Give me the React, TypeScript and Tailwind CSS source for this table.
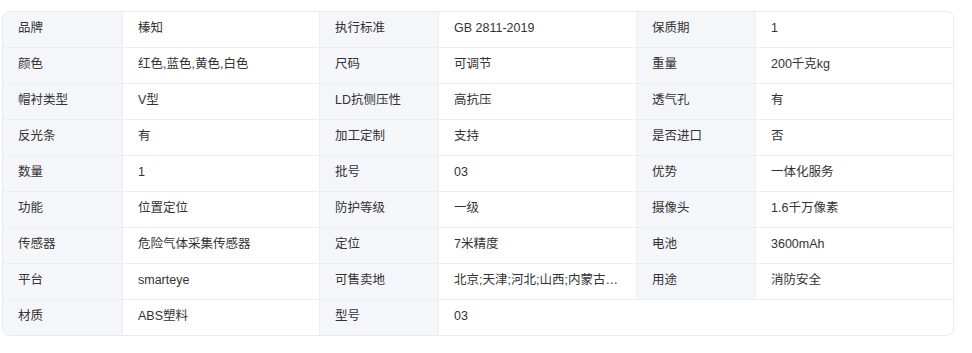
import React from "react";

const rows: [string, string, string, string, string, string][] = [
  ["品牌", "榛知", "执行标准", "GB 2811-2019", "保质期", "1"],
  ["颜色", "红色,蓝色,黄色,白色", "尺码", "可调节", "重量", "200千克kg"],
  ["帽衬类型", "V型", "LD抗侧压性", "高抗压", "透气孔", "有"],
  ["反光条", "有", "加工定制", "支持", "是否进口", "否"],
  ["数量", "1", "批号", "03", "优势", "一体化服务"],
  ["功能", "位置定位", "防护等级", "一级", "摄像头", "1.6千万像素"],
  ["传感器", "危险气体采集传感器", "定位", "7米精度", "电池", "3600mAh"],
  ["平台", "smarteye", "可售卖地", "北京;天津;河北;山西;内蒙古;辽宁;吉林;黑龙江", "用途", "消防安全"],
];

const Label = ({ t }: { t: string }) => (
  <div className="bg-[#f5f6fa] h-[35px] flex items-center pl-[15px] pr-[10px] pb-[2px] min-w-0">
    <span className="truncate">{t}</span>
  </div>
);
const Value = ({ t, span }: { t: string; span?: boolean }) => (
  <div className={"bg-white h-[35px] flex items-center pl-[15px] pr-[16px] pb-[2px] min-w-0 " + (span ? "col-span-3" : "")}>
    <span className="truncate">{t}</span>
  </div>
);

export default function App() {
  return (
    <div className="bg-white w-[972px] h-[353px] pt-[11px] pl-[2px]" style={{ fontFamily: '"Liberation Sans", "Noto Sans CJK SC", sans-serif' }}>
      <div className="w-[952px] border border-[#e9ebef] rounded-[8px] overflow-hidden bg-[#eceef2]">
        <div className="grid grid-cols-[119px_196px_118px_197px_118px_197px] gap-px text-[12.5px] text-[#333]">
          {rows.map((r, i) => (
            <React.Fragment key={i}>
              <Label t={r[0]} />
              <Value t={r[1]} />
              <Label t={r[2]} />
              <Value t={r[3]} />
              <Label t={r[4]} />
              <Value t={r[5]} />
            </React.Fragment>
          ))}
          <Label t="材质" />
          <Value t="ABS塑料" />
          <Label t="型号" />
          <Value t="03" span />
        </div>
      </div>
    </div>
  );
}
